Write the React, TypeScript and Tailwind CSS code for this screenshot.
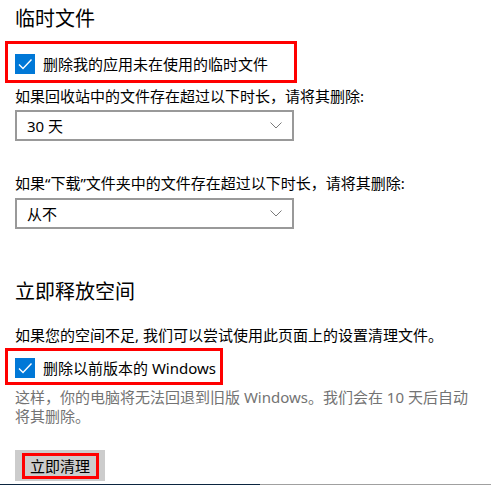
import React from 'react'

const font = { fontFamily: '"Noto Sans", "Noto Sans CJK SC", sans-serif' }

const Check = () => (
  <span className="flex h-[20px] w-[20px] shrink-0 items-center justify-center bg-[#0078d7]">
    <svg width="20" height="20" viewBox="0 0 20 20" fill="none">
      <path d="M4 10.5 L8 14.5 L16.5 5.5" stroke="white" strokeWidth="1.4" />
    </svg>
  </span>
)

const Select = ({ value, className }: { value: string; className: string }) => (
  <div className={`flex h-[31px] w-[279px] items-center justify-between border-2 border-[#999999] pl-[10px] pr-[10px] ${className}`}>
    <span className="text-[15px] leading-[20px] text-black">{value}</span>
    <svg width="12" height="7" viewBox="0 0 12 7" fill="none">
      <path d="M0.5 0.5 L6 6 L11.5 0.5" stroke="#7a7a7a" strokeWidth="1" />
    </svg>
  </div>
)

export default function App() {
  return (
    <div className="flex h-[485px] w-[491px] flex-col overflow-hidden bg-white" style={font}>
      <div className="flex flex-col px-[15px] pt-[5px]">
        <h2 className="text-[20px] leading-[28px] text-black">临时文件</h2>

        <div className="-ml-[10px] mt-[8px] flex h-[42px] w-[292px] items-center gap-[8px] border-[3px] border-[#ff0000] pl-[7px] pt-[3px]">
          <Check />
          <span className="text-[15px] leading-[20px] text-black">删除我的应用未在使用的临时文件</span>
        </div>

        <p className="mt-[3px] text-[15px] leading-[20px] text-black">如果回收站中的文件存在超过以下时长，请将其删除:</p>
        <Select value="30 天" className="mt-[4px]" />

        <p className="mt-[32px] text-[15px] leading-[20px] text-black">如果“下载”文件夹中的文件存在超过以下时长，请将其删除:</p>
        <Select value="从不" className="mt-[5px]" />

        <h2 className="mt-[49px] text-[20px] leading-[28px] text-black">立即释放空间</h2>

        <p className="mt-[19px] text-[15px] leading-[20px] text-black">如果您的空间不足, 我们可以尝试使用此页面上的设置清理文件。</p>

        <div className="-ml-[10px] mt-[3px] flex h-[37px] w-[218px] items-center gap-[8px] border-[3px] border-[#ff0000] pl-[7px] pt-[2px]">
          <Check />
          <span className="text-[15px] leading-[20px] text-black">删除以前版本的 Windows</span>
        </div>

        <p className="mt-[3px] w-[455px] text-[15px] leading-[19px] text-[#737373]">
          这样，你的电脑将无法回退到旧版 Windows。我们会在 10 天后自动将其删除。
        </p>

        <div className="mt-[24px] flex h-[31px] w-[90px] items-center justify-center bg-[#cccccc]">
          <span className="flex h-[26px] w-[77px] items-center justify-center border-[3px] border-[#ff0000] text-[15px] leading-[20px] text-black">
            立即清理
          </span>
        </div>
      </div>

      <div className="mt-[3px] flex h-px w-full">
        <div className="h-px w-[260px] bg-[#0b2540]" />
        <div className="h-px flex-1 bg-[#a0a0a0]" />
      </div>
    </div>
  )
}
